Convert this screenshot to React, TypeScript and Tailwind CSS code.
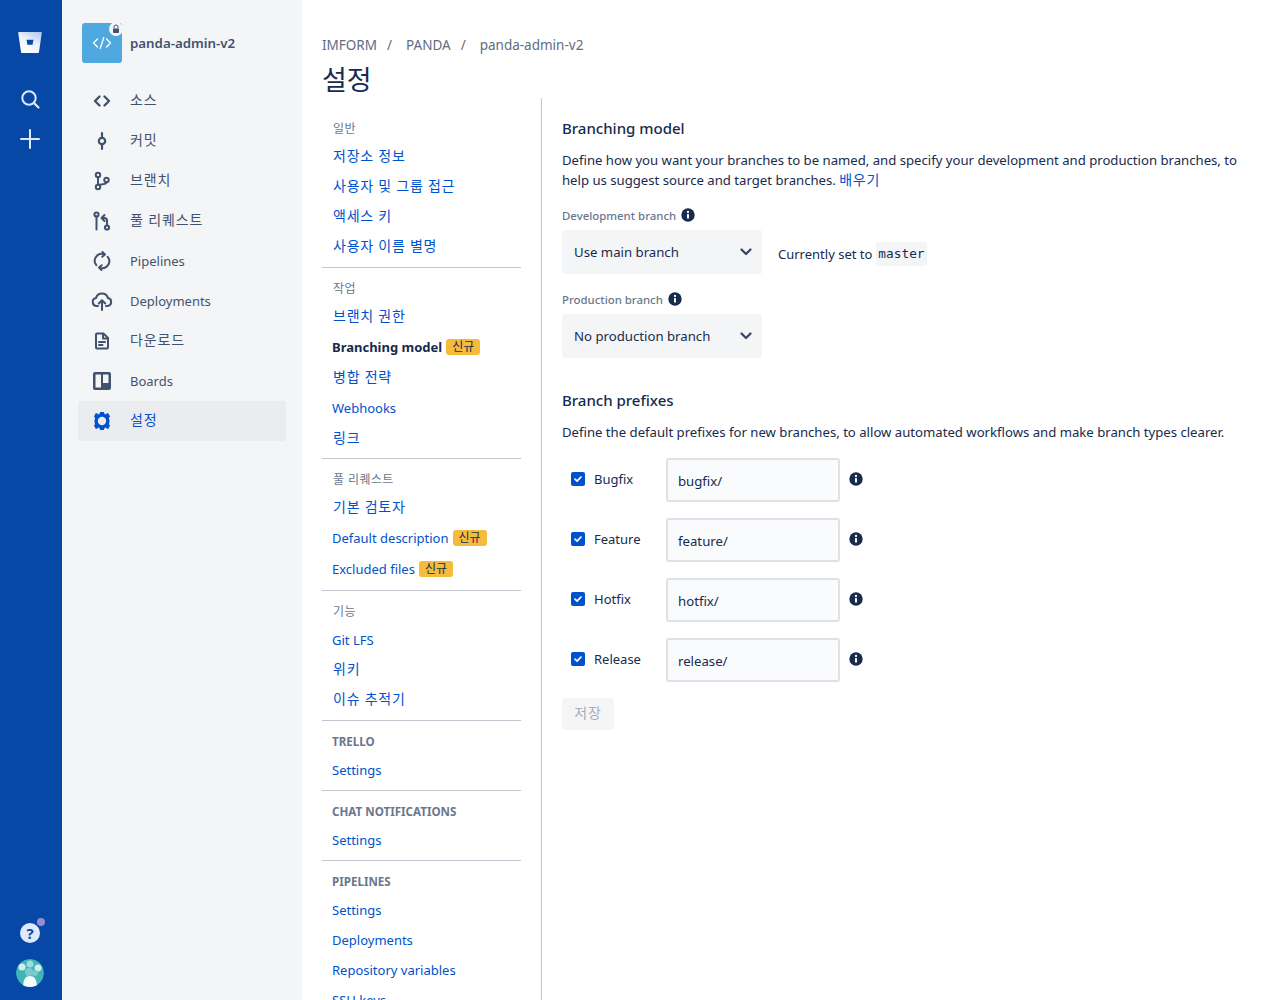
import React from "react";

const font = { fontFamily: '"Noto Sans", "Noto Sans CJK KR", sans-serif' };

function Info({ lift }: { lift?: boolean }) {
  return (
    <svg width="16" height="16" viewBox="0 0 16 16" className={`shrink-0 ${lift ? "mb-[2px]" : ""}`}>
      <circle cx="8" cy="8" r="6.7" fill="#172b4d" />
      <rect x="7" y="7" width="2" height="4.6" rx="0.6" fill="#fff" />
      <circle cx="8" cy="5" r="1.15" fill="#fff" />
    </svg>
  );
}

function Chevron() {
  return (
    <svg width="24" height="24" viewBox="0 0 24 24" className="shrink-0">
      <path d="M7.5 9.5l4.5 4.5 4.5-4.5" fill="none" stroke="#344563" strokeWidth="2.2" strokeLinecap="round" strokeLinejoin="round" />
    </svg>
  );
}

function Badge() {
  return <span className="ml-1 inline-flex h-4 w-[34px] items-center justify-center rounded-[3px] bg-[#f6bb3a] text-[12px] leading-4 font-normal text-[#172b4d]">신규</span>;
}

const C = "#42526e";
const icons: Record<string, React.ReactNode> = {
  source: <path d="M9.5 7.5L5 12l4.5 4.5M14.5 7.5L19 12l-4.5 4.5" fill="none" stroke={C} strokeWidth="2.4" strokeLinecap="round" strokeLinejoin="round" />,
  commit: (
    <g fill="none" stroke={C} strokeWidth="2.2" strokeLinecap="round">
      <circle cx="12" cy="12" r="3.2" />
      <path d="M12 4v4.8M12 15.2V20" />
    </g>
  ),
  branch: (
    <g fill="none" stroke={C} strokeWidth="2" strokeLinecap="round">
      <circle cx="8" cy="6" r="2.2" />
      <circle cx="8" cy="18" r="2.2" />
      <circle cx="16.5" cy="11" r="2.2" />
      <path d="M8 8.2v7.6M16.5 13.2c0 2.4-4.5 2-8.5 2.6" />
    </g>
  ),
  pr: (
    <g fill="none" stroke={C} strokeWidth="2" strokeLinecap="round" strokeLinejoin="round">
      <circle cx="6.5" cy="5.5" r="2.1" />
      <circle cx="17" cy="18.5" r="2.1" />
      <path d="M6.5 7.6V20.5M17 16.4V11.5c0-1.6-1-2.5-2.5-2.5H12M14.5 6l-3 3 3 3" />
    </g>
  ),
  pipelines: (
    <g fill="none" stroke={C} strokeWidth="2" strokeLinecap="round" strokeLinejoin="round">
      <path d="M6.3 16.2A7 7 0 0 1 14.5 5.4M17.7 7.8a7 7 0 0 1-8.2 10.8" />
      <path d="M12.5 3l2.4 2.5-2.6 2.3M11.5 21l-2.4-2.5 2.6-2.3" />
    </g>
  ),
  deploy: (
    <g fill="none" stroke={C} strokeWidth="2" strokeLinecap="round" strokeLinejoin="round">
      <path d="M8 17H6.5a4 4 0 0 1-.6-7.9 6.3 6.3 0 0 1 12.1 0 4 4 0 0 1-.5 7.9H16" />
      <path d="M12 21v-9M8.8 14.5L12 11.3l3.2 3.2" />
    </g>
  ),
  download: (
    <g fill="none" stroke={C} strokeWidth="2" strokeLinejoin="round" strokeLinecap="round">
      <path d="M7 4.5h6.5L18 9v9.5a1 1 0 0 1-1 1H7a1 1 0 0 1-1-1v-13a1 1 0 0 1 1-1z" />
      <path d="M13 5v4.5h4.5M9 13h6M9 16h3.5" />
    </g>
  ),
  boards: (
    <path fillRule="evenodd" clipRule="evenodd" d="M5 3h14a2 2 0 0 1 2 2v14a2 2 0 0 1-2 2H5a2 2 0 0 1-2-2V5a2 2 0 0 1 2-2zm.5 2.5v13h5.5v-13H5.5zm7.5 0v8.5h5.5V5.5H13z" fill={C} />
  ),
  settings: (
    <g>
      <circle cx="12" cy="12" r="5.9" fill="none" stroke="#0052cc" strokeWidth="3.4" />
      <path d="M10 3h4l.5 2.6h-5zM10 21h4l.5-2.6h-5zM3.9 7.5l2-3.5 2.5 1-2.5 4.4zM20.1 16.5l-2 3.5-2.5-1 2.5-4.4zM3.9 16.5l2 3.5 2.5-1-2.5-4.4zM20.1 7.5l-2-3.5-2.5 1 2.5 4.4z" fill="#0052cc" />
    </g>
  ),
};

const isKo = (s: unknown) => typeof s === "string" && /[가-힣]/.test(s);

function NavRow({ icon, label, active }: { icon: string; label: string; active?: boolean }) {
  return (
    <div className={`flex h-10 items-center rounded-[3px] pl-3 ${active ? "bg-[#ebecf0] text-[#0052cc]" : "text-[#42526e]"}`}>
      <svg width="24" height="24" viewBox="0 0 24 24" className="shrink-0">{icons[icon]}</svg>
      <span className={`ml-4 leading-5 ${isKo(label) ? "pb-[2px] text-[14px] tracking-[0.85px]" : "text-[13px]"}`}>{label}</span>
    </div>
  );
}

function Group({ title, upper, last, children, pad }: { title: string; upper?: boolean; last?: boolean; pad?: string; children: React.ReactNode }) {
  return (
    <div className={`${last ? "" : "border-b border-[#c1c7d0]"} ${pad ?? "pb-[6px]"}`}>
      <div className={`flex h-[33px] items-center text-[#6b778c] ${upper ? "pt-2 pl-2.5 text-[11.6px] font-bold" : "pt-2 pl-[11px] text-[12px] tracking-[0.4px]"}`}>{title}</div>
      <div>{children}</div>
    </div>
  );
}

function Item({ children, active, tall }: { children: React.ReactNode; active?: boolean; tall?: boolean }) {
  const first = Array.isArray(children) ? children[0] : children;
  const ko = isKo(first);
  return (
    <div className={`flex items-center leading-5 ${tall ? "h-[31px]" : "h-[30px]"} ${ko ? "pl-[11px] text-[14px] tracking-[0.75px]" : tall ? "pl-2.5 text-[13px]" : "pt-[2px] pl-2.5 text-[13px]"} ${active ? "text-[13.2px] font-bold text-[#172b4d]" : "text-[#0052cc]"}`}>
      {children}
    </div>
  );
}

function Select({ value }: { value: string }) {
  return (
    <div className="flex h-11 w-[200px] items-center justify-between rounded-[3px] bg-[#f4f5f7] pr-1 pl-3 text-[13.2px] text-[#172b4d]">
      <span>{value}</span>
      <Chevron />
    </div>
  );
}

function Prefix({ name, value }: { name: string; value: string }) {
  return (
    <div className="flex h-[60px] items-start pl-[9px]">
      <div className="flex h-11 items-center pb-[2px]">
        <span className="flex h-3.5 w-3.5 items-center justify-center rounded-[2px] bg-[#0052cc]">
          <svg width="10" height="10" viewBox="0 0 10 10">
            <path d="M2 5.2l2.1 2L8 3" fill="none" stroke="#fff" strokeWidth="1.7" strokeLinecap="round" strokeLinejoin="round" />
          </svg>
        </span>
        <span className="ml-[9px] w-[72px] text-[13px] text-[#172b4d]">{name}</span>
      </div>
      <div className="flex h-11 w-[174px] items-center rounded-[3px] border-2 border-[#dfe1e6] bg-[#fafbfc] pt-px pl-2.5 text-[13.2px] text-[#172b4d]">{value}</div>
      <div className="ml-2 flex h-11 items-center pb-[2px]"><Info /></div>
    </div>
  );
}

export default function App() {
  return (
    <div className="flex h-[1000px] overflow-hidden bg-white" style={font}>
      <aside className="flex w-[62px] shrink-0 flex-col items-center bg-[#0747a6] pt-[30px] pr-[2px] pb-[13px]">
        <svg width="24" height="24" viewBox="0 0 24 24">
          <defs>
            <linearGradient id="bb" x1="0.9" y1="0" x2="0.3" y2="1">
              <stop offset="0" stopColor="#b3c9ee" />
              <stop offset="0.5" stopColor="#eef3fc" />
              <stop offset="1" stopColor="#ffffff" />
            </linearGradient>
          </defs>
          <path d="M0.8 2h22.4a.6.6 0 0 1 .6.7L21 22.1a1 1 0 0 1-1 .9H4a1 1 0 0 1-1-.9L.2 2.7A.6.6 0 0 1 .8 2z" fill="url(#bb)" />
          <path d="M8.6 9.8h6.8l-.8 5H9.4z" fill="#0747a6" />
        </svg>
        <svg width="24" height="24" viewBox="0 0 24 24" className="mt-[33px]">
          <circle cx="11" cy="11" r="6.7" fill="none" stroke="#deebff" strokeWidth="2" />
          <path d="M16 16l4.5 4.5" stroke="#deebff" strokeWidth="2.2" strokeLinecap="round" />
        </svg>
        <svg width="24" height="24" viewBox="0 0 24 24" className="mt-4">
          <path d="M12 3v18M3 12h18" stroke="#deebff" strokeWidth="2" strokeLinecap="round" />
        </svg>
        <div className="relative mt-auto h-5 w-5 rounded-full bg-[#deebff]">
          <span className="absolute inset-0 flex items-center justify-center text-[15px] leading-5 font-bold text-[#0747a6]">?</span>
          <span className="absolute top-[-5px] right-[-5px] h-2 w-2 rounded-full bg-[#9a8ad8]" />
        </div>
        <svg width="28" height="28" viewBox="0 0 28 28" className="mt-4 rounded-full">
          <circle cx="14" cy="14" r="14" fill="#3fb5b5" />
          <circle cx="6" cy="8" r="3.5" fill="#cfeeee" />
          <circle cx="14" cy="5" r="3.5" fill="#9fdcdc" />
          <circle cx="22" cy="9" r="3.5" fill="#cfeeee" />
          <circle cx="13" cy="13" r="4" fill="#79cccc" />
          <circle cx="19" cy="14" r="3" fill="#79cccc" />
          <path d="M7 28c0-8 3-11 7-11s7 3 7 11z" fill="#f3fbfb" />
        </svg>
      </aside>

      <nav className="w-[240px] shrink-0 bg-[#f4f5f7] pt-[23px] pr-4 pl-4">
        <div className="flex h-10 items-center pl-1">
          <div className="relative flex h-10 w-10 items-center justify-center rounded-[3px] bg-[#4fa9e0]">
            <svg width="24" height="24" viewBox="0 0 24 24">
              <path d="M7.5 8l-4 4 4 4M16.5 8l4 4-4 4M13.8 6.5l-3.6 11" fill="none" stroke="#fff" strokeWidth="1.3" strokeLinecap="round" strokeLinejoin="round" />
            </svg>
            <span className="absolute top-[-1px] right-[-1px] flex h-3.5 w-3.5 items-center justify-center rounded-full bg-[#f4f5f7]">
              <svg width="10" height="10" viewBox="0 0 10 10">
                <path d="M3 4.5V3a2 2 0 0 1 4 0v1.5" fill="none" stroke="#42526e" strokeWidth="1" />
                <rect x="2" y="4.5" width="6" height="4.5" rx="0.8" fill="#42526e" />
              </svg>
            </span>
          </div>
          <span className="ml-2 pt-[2px] text-[13.3px] font-semibold text-[#42526e]">panda-admin-v2</span>
        </div>
        <div className="mt-[18px]">
          <NavRow icon="source" label="소스" />
          <NavRow icon="commit" label="커밋" />
          <NavRow icon="branch" label="브랜치" />
          <NavRow icon="pr" label="풀 리퀘스트" />
          <NavRow icon="pipelines" label="Pipelines" />
          <NavRow icon="deploy" label="Deployments" />
          <NavRow icon="download" label="다운로드" />
          <NavRow icon="boards" label="Boards" />
          <NavRow icon="settings" label="설정" active />
        </div>
      </nav>

      <main className="min-w-0 flex-1 pt-[35px] pl-5">
        <div className="flex h-5 items-center text-[13.5px] leading-5 text-[#5e6c84]">
          <span>IMFORM</span>
          <span className="mr-[14px] ml-[10px]">/</span>
          <span>PANDA</span>
          <span className="mr-[14px] ml-[10px]">/</span>
          <span>panda-admin-v2</span>
        </div>
        <h1 className="flex h-[43px] items-center pt-[7px] text-[27px] leading-8 font-normal text-[#172b4d]">설정</h1>
        <div className="flex">
          <div className="w-[199px] shrink-0 pt-[10px]">
            <Group title="일반">
              <Item>저장소 정보</Item>
              <Item>사용자 및 그룹 접근</Item>
              <Item>액세스 키</Item>
              <Item>사용자 이름 별명</Item>
            </Group>
            <Group title="작업" pad="pb-[5px]">
              <Item>브랜치 권한</Item>
              <Item active tall>Branching model<Badge /></Item>
              <Item>병합 전략</Item>
              <Item tall>Webhooks</Item>
              <Item>링크</Item>
            </Group>
            <Group title="풀 리퀘스트">
              <Item>기본 검토자</Item>
              <Item tall>Default description<Badge /></Item>
              <Item tall>Excluded files<Badge /></Item>
            </Group>
            <Group title="기능">
              <Item>Git LFS</Item>
              <Item>위키</Item>
              <Item>이슈 추적기</Item>
            </Group>
            <Group title="TRELLO" upper>
              <Item>Settings</Item>
            </Group>
            <Group title="CHAT NOTIFICATIONS" upper>
              <Item>Settings</Item>
            </Group>
            <Group title="PIPELINES" upper last>
              <Item>Settings</Item>
              <Item>Deployments</Item>
              <Item>Repository variables</Item>
              <Item>SSH keys</Item>
            </Group>
          </div>
          <section className="ml-5 min-h-[1000px] flex-1 border-l border-[#c1c7d0] pt-5 pr-5 pl-5 text-[13px] leading-5 text-[#172b4d]">
            <h2 className="text-[15px] leading-5 font-medium">Branching model</h2>
            <p className="mt-3 text-[13.15px]">
              Define how you want your branches to be named, and specify your development and production branches, to help us suggest source and target branches. <span className="text-[14px] tracking-[0.75px] text-[#0052cc]">배우기</span>
            </p>
            <div className="mt-4 flex h-5 items-center gap-1 text-[11.4px] font-medium text-[#6b778c]">Development branch <Info lift /></div>
            <div className="mt-1 flex items-center">
              <Select value="Use main branch" />
              <span className="ml-4 pt-1">Currently set to</span>
              <code className="mt-1 ml-1 rounded-[3px] bg-[#f4f5f7] px-[2px] text-[12.8px] leading-6" style={{ fontFamily: '"DejaVu Sans Mono", monospace' }}>master</code>
            </div>
            <div className="mt-4 flex h-5 items-center gap-1 text-[11.4px] font-medium text-[#6b778c]">Production branch <Info lift /></div>
            <div className="mt-1"><Select value="No production branch" /></div>
            <h2 className="mt-8 text-[15px] leading-5 font-medium">Branch prefixes</h2>
            <p className="mt-3 text-[13.15px]">Define the default prefixes for new branches, to allow automated workflows and make branch types clearer.</p>
            <div className="mt-4">
              <Prefix name="Bugfix" value="bugfix/" />
              <Prefix name="Feature" value="feature/" />
              <Prefix name="Hotfix" value="hotfix/" />
              <Prefix name="Release" value="release/" />
            </div>
            <div className="flex h-8 w-[52px] items-center justify-center rounded-[3px] bg-[#f4f5f7] pb-[2px] text-[14px] tracking-[0.75px] text-[#a5adba]">저장</div>
          </section>
        </div>
      </main>
    </div>
  );
}
